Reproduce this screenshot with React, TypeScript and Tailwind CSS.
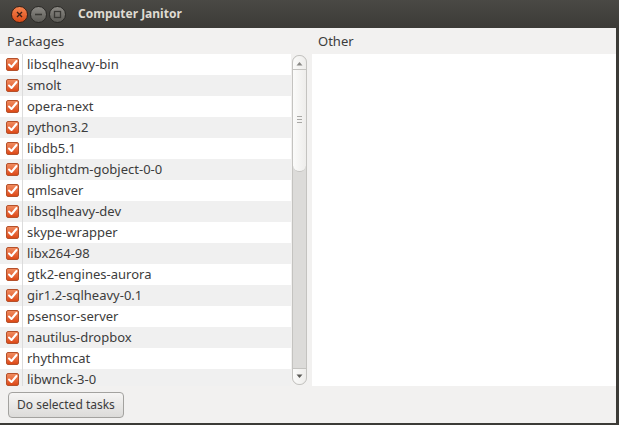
const PACKAGES = [
  "libsqlheavy-bin",
  "smolt",
  "opera-next",
  "python3.2",
  "libdb5.1",
  "liblightdm-gobject-0-0",
  "qmlsaver",
  "libsqlheavy-dev",
  "skype-wrapper",
  "libx264-98",
  "gtk2-engines-aurora",
  "gir1.2-sqlheavy-0.1",
  "psensor-server",
  "nautilus-dropbox",
  "rhythmcat",
  "libwnck-3-0",
];

function Check() {
  return (
    <span className="flex h-[13px] w-[13px] items-center justify-center rounded-[2px] border border-[#b5512b] bg-gradient-to-b from-[#f08a5d] to-[#dd4814]">
      <svg width="11" height="11" viewBox="0 0 11 11" fill="none" aria-hidden="true">
        <path d="M2 5.5 4.5 8 9.5 2" stroke="#ffffff" strokeWidth="2" strokeLinecap="round" strokeLinejoin="round" />
      </svg>
    </span>
  );
}

function WinButton({ kind }: { kind: "close" | "min" | "max" }) {
  const bg =
    kind === "close"
      ? "bg-gradient-to-b from-[#f7844e] to-[#d94a14] border-[#3a2218]"
      : "bg-gradient-to-b from-[#8c8a85] to-[#5d5c57] border-[#2b2a27]";
  return (
    <span className={`flex h-[17px] w-[17px] items-center justify-center rounded-full border ${bg}`}>
      <svg width="9" height="9" viewBox="0 0 9 9" fill="none" aria-hidden="true">
        {kind === "close" && <path d="M2 2 7 7M7 2 2 7" stroke="#3c2016" strokeWidth="1.4" />}
        {kind === "min" && <path d="M1 4.5H8" stroke="#3a3935" strokeWidth="1.6" />}
        {kind === "max" && <rect x="1.5" y="1.5" width="6" height="6" stroke="#3a3935" strokeWidth="1.3" />}
      </svg>
    </span>
  );
}

export default function App() {
  return (
    <div
      className="flex h-[425px] w-[619px] flex-col overflow-hidden bg-[#f2f1f0] text-[13px] text-[#3c3c3c]"
      style={{ fontFamily: '"Noto Sans", "DejaVu Sans", sans-serif' }}
    >
      {/* title bar */}
      <div className="flex h-[28px] shrink-0 items-center bg-gradient-to-b from-[#4a4945] to-[#3c3b37] pl-[11px]">
        <div className="flex items-center gap-[2px]">
          <WinButton kind="close" />
          <WinButton kind="min" />
          <WinButton kind="max" />
        </div>
        <span className="ml-[12px] text-[12px] font-bold text-[#dfdbd2]">Computer Janitor</span>
      </div>

      <div className="flex flex-1 flex-col border-r-[3px] border-b-[2px] border-[#3c3b37]">
        <div className="flex h-[26px] shrink-0 items-center pt-[1px]">
          <span className="w-[311px] pl-[7px]">Packages</span>
          <span className="pl-[7px]">Other</span>
        </div>

        <div className="flex h-[332px] shrink-0">
          {/* package list */}
          <div className="flex w-[291px] flex-col overflow-hidden bg-white">
            {PACKAGES.map((p, i) => (
              <div
                key={p}
                className={`flex h-[21px] shrink-0 items-center ${i % 2 ? "bg-[#f0f0f0]" : "bg-white"}`}
              >
                <span className="flex w-[22px] justify-center pl-[2px]">
                  <Check />
                </span>
                <span className="h-full w-px bg-[#dcdcdc]" />
                <span className="pl-[4px] leading-none">{p}</span>
              </div>
            ))}
          </div>

          {/* scrollbar */}
          <div className="ml-[1px] flex w-[15px] flex-col bg-[#f2f1f0] py-[1px]">
            <div className="flex flex-1 flex-col rounded-[7px] border border-[#c4c3c0] bg-[#dcdbd9]">
              <div className="flex h-[116px] flex-col items-center rounded-[7px] border-b border-[#c4c3c0] bg-gradient-to-r from-[#fbfbfa] to-[#eeedeb]">
                <svg width="7" height="5" viewBox="0 0 7 5" className="mt-[5px]" aria-hidden="true">
                  <path d="M0.5 4.5 3.5 1 6.5 4.5Z" fill="#8a8986" />
                </svg>
                <div className="mt-[3px] h-px w-full bg-[#c4c3c0]" />
                <div className="mt-[46px] flex flex-col gap-[2px]">
                  <span className="h-px w-[5px] bg-[#a9a8a5]" />
                  <span className="h-px w-[5px] bg-[#a9a8a5]" />
                  <span className="h-px w-[5px] bg-[#a9a8a5]" />
                </div>
              </div>
              <div className="flex-1" />
              <div className="flex h-[16px] items-center justify-center rounded-b-[7px] border-t border-[#c4c3c0] bg-gradient-to-r from-[#fbfbfa] to-[#eeedeb]">
                <svg width="7" height="5" viewBox="0 0 7 5" aria-hidden="true">
                  <path d="M0.5 0.5 3.5 4 6.5 0.5Z" fill="#5a5956" />
                </svg>
              </div>
            </div>
          </div>

          {/* other */}
          <div className="ml-[5px] flex-1 bg-white" />
        </div>

        <div className="flex flex-1 items-center pl-[8px]">
          <button className="h-[26px] rounded-[4px] border border-[#a3a29f] bg-gradient-to-b from-[#f6f5f4] to-[#dcdbd9] px-[8px] text-[12px] text-[#3c3c3c]">
            Do selected tasks
          </button>
        </div>
      </div>
    </div>
  );
}
